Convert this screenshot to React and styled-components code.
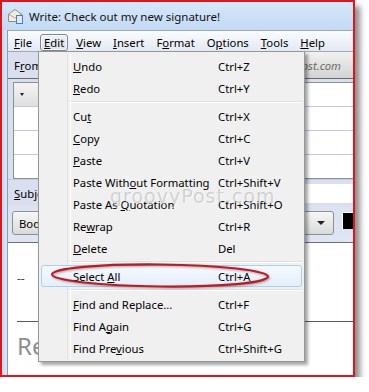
import styled, { createGlobalStyle } from 'styled-components';

const GlobalStyle = createGlobalStyle`
  html, body { margin: 0; padding: 0; background: #fff; }
  body {
    font-family: 'Noto Sans', 'Liberation Sans', Arial, sans-serif;
    font-size: 11.3px;
    color: #000;
  }
  * { box-sizing: border-box; }
`;

const Frame = styled.div`
  position: relative;
  width: 355px;
  height: 377px;
  border: 2px solid #e2131a;
  box-shadow: 5px 6px 6px rgba(0, 0, 0, 0.45);
  display: flex;
  flex-direction: column;
  background: #d2e3f6;
`;

const TitleBar = styled.div`
  height: 28px;
  flex: none;
  display: flex;
  align-items: center;
  gap: 6px;
  padding-left: 6px;
  background: linear-gradient(#d6e8fa, #c2daf4);
  border-top-left-radius: 6px;
  font-size: 11.5px;
  color: #111;
`;

const Client = styled.div`
  flex: 1;
  display: flex;
  min-height: 0;
`;

const LeftEdge = styled.div`
  width: 6px;
  flex: none;
  background: linear-gradient(90deg, #c6daf2, #dce8f7);
  border-right: 1px solid #8d9db2;
`;

const Content = styled.div`
  flex: 1;
  display: flex;
  flex-direction: column;
  overflow: hidden;
  background: #d9dfee;
`;

const MenuBar = styled.div`
  height: 22px;
  flex: none;
  display: flex;
  align-items: flex-start;
  padding-top: 3px;
  border-top: 1px solid #9aaabe;
  border-bottom: 1px solid #a3a9b2;
  background: linear-gradient(#fbfcfe, #e3e9f2);
`;

const TopItem = styled.div`
  height: 17px;
  line-height: 15px;
  padding: 0 3px;
  margin: 0 2px;
  border: 1px solid ${(p) => (p.$open ? '#7c8794' : 'transparent')};
  border-radius: 3px;
  background: ${(p) => (p.$open ? 'linear-gradient(#eef2f7, #dce3ec)' : 'none')};
  box-shadow: ${(p) => (p.$open ? 'inset 0 0 0 1px rgba(255,255,255,0.7)' : 'none')};
`;

const Key = styled.span`
  text-decoration: underline;
  text-underline-offset: 1px;
`;

const FromRow = styled.div`
  height: 27px;
  flex: none;
  display: flex;
  border-bottom: 1px solid #6b6b6b;
`;

const Label = styled.div`
  width: 60px;
  flex: none;
  display: flex;
  align-items: center;
  padding-left: 6px;
`;

const FromField = styled.div`
  flex: 1;
  display: flex;
  align-items: center;
  justify-content: flex-end;
  padding-right: 12px;
  background: linear-gradient(#f1f1f1, #d3d3d3);
  color: #6a6a6a;
  font-style: italic;
`;

const AddressArea = styled.div`
  flex: none;
  padding: 3px 0 0 5px;
`;

const AddressBox = styled.div`
  background: #fff;
  border: 1px solid #8e8f8f;
  border-right: none;
`;

const AddrRow = styled.div`
  height: ${(p) => (p.$last ? 23 : 24)}px;
  display: flex;
  border-bottom: ${(p) => (p.$last ? 'none' : '1px solid #c5c5f3')};
`;

const AddrType = styled.div`
  width: 90px;
  display: flex;
  align-items: center;
  padding-left: 6px;
  background: linear-gradient(#f4f4f4, #dedede);
  border-right: 1px solid #b0b0b0;
`;

const TinyArrow = styled.span`
  width: 0;
  height: 0;
  border-left: 2.5px solid transparent;
  border-right: 2.5px solid transparent;
  border-top: 3px solid #222;
`;

const SubjectRow = styled.div`
  height: 27px;
  flex: none;
  display: flex;
  align-items: center;
  border-top: 1px solid #c5cbe8;
`;

const SubjectInput = styled.div`
  flex: 1;
  height: 19px;
  background: #fff;
`;

const FormatBar = styled.div`
  height: 37px;
  flex: none;
  display: flex;
  align-items: flex-start;
  gap: 8px;
  padding: 5px 0 0 4px;
  border-bottom: 1px solid #707070;
  background: linear-gradient(#dbe2f0, #dfe6f3);
`;

const Select = styled.div`
  width: ${(p) => p.$w}px;
  flex: none;
  height: 24px;
  display: flex;
  align-items: center;
  justify-content: space-between;
  padding: 0 8px 0 6px;
  border: 1px solid #8f8f8f;
  border-radius: 3px;
  background: linear-gradient(#f7f7f7, #dadada);
`;

const SelectArrow = styled.span`
  width: 0;
  height: 0;
  border-left: 4px solid transparent;
  border-right: 4px solid transparent;
  border-top: 4px solid #222;
`;

const Swatch = styled.div`
  width: 14px;
  height: 17px;
  flex: none;
  margin-top: 1px;
  background: #000;
  border-top: 1px solid #fff;
  border-left: 1px solid #fff;
`;

const Body = styled.div`
  flex: 1;
  background: #fff;
  padding: 28px 0 0 9px;
`;

const Dash = styled.div`
  line-height: 16px;
  font-size: 12px;
  color: #444;
`;

const Rule = styled.div`
  margin-top: 34px;
  height: 1px;
  background: #5a5a5a;
`;

const BigText = styled.div`
  margin-top: 10px;
  font-size: 24px;
  line-height: 28px;
  color: #8e8e8e;
`;

const DropMenu = styled.div`
  position: absolute;
  left: 36px;
  top: 49px;
  width: 267px;
  padding: 3px 2px 2px 2px;
  border: 1px solid #979797;
  background: #f0f0f0;
  box-shadow: 3px 3px 3px rgba(0, 0, 0, 0.35);

  &::before {
    content: '';
    position: absolute;
    left: 28px;
    top: 2px;
    bottom: 2px;
    width: 2px;
    border-left: 1px solid #e2e3e3;
    border-right: 1px solid #fff;
  }
`;

const MenuRow = styled.div`
  position: relative;
  height: 22px;
  display: grid;
  grid-template-columns: 145px 1fr;
  align-items: center;
  padding-left: ${(p) => (p.$hot ? 31 : 32)}px;
  border: ${(p) => (p.$hot ? '1px solid #a9d0ef' : 'none')};
  border-radius: 3px;
  background: ${(p) => (p.$hot ? 'linear-gradient(#f4f9fe, #e4effb)' : 'none')};
`;

const Separator = styled.div`
  height: 2px;
  margin: 2px 0 2px 27px;
  border-top: 1px solid #e0e0e0;
  border-bottom: 1px solid #fff;
`;

const Watermark = styled.div`
  position: absolute;
  left: 108px;
  top: 183px;
  font-family: 'DejaVu Sans', sans-serif;
  font-size: 19px;
  letter-spacing: 1px;
  color: rgba(90, 90, 90, 0.24);
  text-shadow: 1px 1px 0 rgba(255, 255, 255, 0.5);
  pointer-events: none;
`;

const Circle = styled.svg`
  position: absolute;
  left: 47px;
  top: 259px;
  pointer-events: none;
  filter: drop-shadow(1px 1px 1px rgba(0, 0, 0, 0.35));
`;

const MailIcon = () => (
  <svg width="15" height="16" viewBox="0 0 15 16">
    <path d="M0.5 6 L7 1.5 L13.5 6 V13.5 H0.5 Z" fill="#f4ecdc" stroke="#8d8d8d" />
    <path d="M0.5 6 L7 10 L13.5 6" fill="none" stroke="#b0a898" />
    <rect x="8.5" y="7.5" width="6" height="8" fill="#dfeafb" stroke="#4d7fbe" />
  </svg>
);

const menuBar = [
  ['F', 'ile'],
  ['E', 'dit'],
  ['V', 'iew'],
  ['I', 'nsert'],
  ['F', 'o', 'rmat'],
  ['O', 'p', 'tions'],
  ['T', 'ools'],
  ['H', 'elp'],
];

const editItems = [
  [['', 'U', 'ndo'], 'Ctrl+Z'],
  [['', 'R', 'edo'], 'Ctrl+Y'],
  '-',
  [['Cu', 't', ''], 'Ctrl+X'],
  [['', 'C', 'opy'], 'Ctrl+C'],
  [['', 'P', 'aste'], 'Ctrl+V'],
  [['Paste With', 'o', 'ut Formatting'], 'Ctrl+Shift+V'],
  [['Paste As ', 'Q', 'uotation'], 'Ctrl+Shift+O'],
  [['Re', 'w', 'rap'], 'Ctrl+R'],
  [['', 'D', 'elete'], 'Del'],
  '-',
  [['Select ', 'A', 'll'], 'Ctrl+A', true],
  '-',
  [['', 'F', 'ind and Replace...'], 'Ctrl+F'],
  [['Find A', 'g', 'ain'], 'Ctrl+G'],
  [['Find Pre', 'v', 'ious'], 'Ctrl+Shift+G'],
];

const topLabel = (parts) => {
  if (parts.length === 2) return (<><Key>{parts[0]}</Key>{parts[1]}</>);
  return (<>{parts[0]}<Key>{parts[1]}</Key>{parts[2]}</>);
};

export default function App() {
  return (
    <>
      <GlobalStyle />
      <Frame>
        <TitleBar>
          <MailIcon />
          <span>Write: Check out my new signature!</span>
        </TitleBar>
        <Client>
          <LeftEdge />
          <Content>
            <MenuBar>
              {menuBar.map((m, i) => (
                <TopItem key={i} $open={i === 1}>{topLabel(m)}</TopItem>
              ))}
            </MenuBar>
            <FromRow>
              <Label>F<Key>r</Key>om:</Label>
              <FromField>gabe@groovypost.com</FromField>
            </FromRow>
            <AddressArea>
              <AddressBox>
                <AddrRow>
                  <AddrType><TinyArrow /></AddrType>
                </AddrRow>
                <AddrRow />
                <AddrRow />
                <AddrRow $last />
              </AddressBox>
            </AddressArea>
            <SubjectRow>
              <Label><Key>S</Key>ubject:</Label>
              <SubjectInput />
            </SubjectRow>
            <FormatBar>
              <Select $w={110}>Body Text<SelectArrow /></Select>
              <Select $w={204}>Variable Width<SelectArrow /></Select>
              <Swatch />
            </FormatBar>
            <Body>
              <Dash>--</Dash>
              <Rule />
              <BigText>Regards</BigText>
            </Body>
          </Content>
        </Client>

        <DropMenu>
          {editItems.map((it, i) =>
            it === '-' ? (
              <Separator key={i} />
            ) : (
              <MenuRow key={i} $hot={it[2]}>
                <span>{it[0][0]}<Key>{it[0][1]}</Key>{it[0][2]}</span>
                <span>{it[1]}</span>
              </MenuRow>
            )
          )}
        </DropMenu>

        <Watermark>groovyPost.com</Watermark>

        <Circle width="224" height="30" viewBox="0 0 224 30">
          <ellipse cx="111" cy="14.5" rx="108" ry="11" fill="none" stroke="#c8161f" strokeWidth="2.2" transform="rotate(0.6 111 14.5)" />
        </Circle>
      </Frame>
    </>
  );
}
